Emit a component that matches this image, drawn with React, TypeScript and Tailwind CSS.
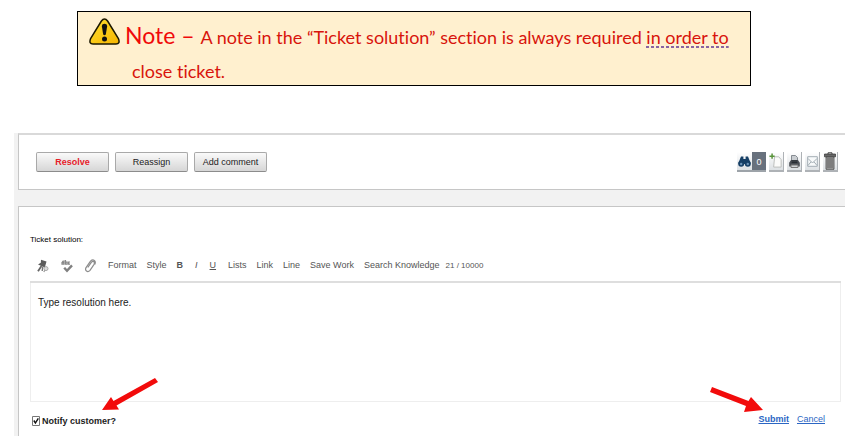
import { useState } from "react";

const tools = ["Lists", "Link", "Line", "Save Work", "Search Knowledge"];

const WarningIcon = () => (
  <svg width="32" height="28" viewBox="0 0 32 28" className="shrink-0" aria-hidden="true">
    <defs>
      <linearGradient id="warn" x1="0" y1="0" x2="1" y2="1">
        <stop offset="0" stopColor="#ffe030" />
        <stop offset="1" stopColor="#f5b400" />
      </linearGradient>
    </defs>
    <path d="M12.4 3Q15.5 -1.2 18.6 3L29.4 20.5Q31.5 26 27 26H4Q-0.5 26 1.6 20.5Z" fill="url(#warn)" stroke="#1c1800" strokeWidth="1.5" />
    <path d="M12.8 8Q13 5.8 15.5 5.8T18.2 8L16.8 16.5Q15.5 18 14.2 16.5Z" fill="#111" />
    <circle cx="15.5" cy="21" r="2.5" fill="#111" />
  </svg>
);

const BinocularsIcon = () => (
  <svg width="13" height="13" viewBox="0 0 13 13" aria-hidden="true">
    <path d="M3 1.5H5.4V4H7.6V1.5H10L12.4 7.5V9H.6V7.5Z" fill="#163f66" />
    <circle cx="3.2" cy="8.8" r="3" fill="#163f66" />
    <circle cx="9.8" cy="8.8" r="3" fill="#163f66" />
    <circle cx="3.2" cy="9" r="1.2" fill="#6b93b7" />
    <circle cx="9.8" cy="9" r="1.2" fill="#6b93b7" />
  </svg>
);

const NewPageIcon = () => (
  <svg width="15" height="18" viewBox="0 0 15 18" aria-hidden="true">
    <path d="M6 4.5H10.5L13 7.5V15.5H5Z" fill="#fbfbfa" stroke="#b9bbb9" />
    <path d="M3.3 1V6.6M.5 3.8H6.1" stroke="#58933a" strokeWidth="1.6" />
  </svg>
);

const PrinterIcon = () => (
  <svg width="11" height="15" viewBox="0 0 11 15" aria-hidden="true">
    <path d="M2.5 7V1.5H6.5L8.5 3.5V7Z" fill="#c9cdd1" stroke="#858b91" />
    <path d="M2 6H9L10.8 8.8V12.5H.2V8.8Z" fill="#4b4f55" />
    <path d="M2.6 7H8.4M2.6 8.6H8.4" stroke="#252a30" />
    <path d="M2 11H9V13.5H2Z" fill="#cfd2d5" stroke="#777" />
  </svg>
);

const MailIcon = () => (
  <svg width="11" height="11" viewBox="0 0 11 11" aria-hidden="true">
    <path d="M.7 .7H10.3V10.3H.7Z" fill="#f7f9fa" stroke="#a3adb4" />
    <path d="M1 2.5L5.5 7L10 2.5M1 9.5L4 5.8M10 9.5L7 5.8" fill="none" stroke="#a3adb4" />
  </svg>
);

const TrashIcon = () => (
  <svg width="12" height="18" viewBox="0 0 12 18" aria-hidden="true">
    <path d="M4 2V.8H8V2" fill="none" stroke="#444" />
    <path d="M.5 2H11.5V4.8H.5Z" fill="#686868" stroke="#333" strokeWidth=".7" />
    <path d="M2 5H10V17.3H2Z" fill="#a5a5a5" stroke="#444" strokeWidth=".8" />
    <path d="M4 6V16M6 6V16M8 6V16" stroke="#444" strokeWidth=".8" />
  </svg>
);

const PinIcon = () => (
  <svg width="12" height="14" viewBox="0 0 12 14" aria-hidden="true">
    <path d="M4 .8L9.5 2.6L8.8 5L7.8 8.4L5.6 7.6L1 5.4L3.8 3.8Z" fill="#5c5c5c" />
    <path d="M4.5 7L1 12.2" stroke="#666" strokeWidth="1.8" />
    <path d="M5.8 7.5L5.2 12" stroke="#777" strokeWidth="1.4" />
    <circle cx="9" cy="9.6" r="2" fill="#ddd" stroke="#aaa" />
    <path d="M7.8 11.2L6.8 13" stroke="#999" strokeWidth="1.2" />
  </svg>
);

const SpellIcon = () => (
  <svg width="12" height="14" viewBox="0 0 12 14" aria-hidden="true">
    <path d="M1 2.5L3 2V5.2H1V3.7H3M4.5 1V5.2H6.2V3.2H4.8M9 3H7.6V5.2H9" fill="none" stroke="#888" strokeWidth="1.2" />
    <path d="M3.2 8.8L6 11.8L11 6.4" fill="none" stroke="#808080" strokeWidth="2.4" />
  </svg>
);

const ClipIcon = () => (
  <svg width="11" height="14" viewBox="0 0 11 14" aria-hidden="true">
    <path d="M2.8 8.5L6.5 3.2Q7.8 1.8 8.9 2.8T8.9 5.6L5 11.3Q3.2 13.3 1.5 12T1.2 8.4L5.5 2.2Q7.5 .2 9.3 1.4T9.7 5.5" fill="none" stroke="#8c8c8c" strokeWidth="1.2" />
  </svg>
);

const iconButton = "flex h-5 w-[15px] items-center justify-center border-b-2 border-r border-[#aeb2b6] bg-gradient-to-b from-white to-[#dde1e4]";
const actionButton = "h-5 w-[73px] rounded-xs border border-[#a9a9a9] border-b-[#8c8c8c] bg-gradient-to-b from-[#fafafa] to-[#d6d6d6] text-[9px] leading-4 text-[#222]";

const App = () => {
  const [notify, setNotify] = useState(true);
  const [text, setText] = useState("Type resolution here.");

  return (
    <main className="bg-white pt-[11px] font-['Liberation_Sans',sans-serif]">
      <section className="mr-[101px] ml-[77px] flex h-[75px] items-start border border-black bg-[#fff0cf] pt-1.5 pl-[11px] font-['Lato',sans-serif] text-[#d8140c]">
        <WarningIcon />
        <p className="pl-1 text-lg leading-[34px] whitespace-nowrap [font-variant-ligatures:none]">
          <span className="text-[23px] leading-[34px] text-[#f00a0a]">Note – </span>
          A note in the “Ticket solution” section is always required{" "}
          <span className="bg-[repeating-linear-gradient(90deg,#8864a2_0_3px,transparent_3px_5px)] bg-[length:100%_2px] bg-bottom bg-no-repeat">in order to</span>
          <br />
          <span className="pl-[7px]">close ticket.</span>
        </p>
      </section>

      <div className="mt-[47px] mr-[7px] ml-[14px] bg-[#f2f2f2] pl-1">
        <header className="flex h-[57px] items-center justify-between border-t-2 border-b border-l border-[#c6c6c6] border-t-[#d9d9d9] bg-white pr-[7px] pl-[17px]">
          <div className="flex gap-1.5">
            <button className={`${actionButton} border-[#777b84] font-bold text-[#e62129]`}>Resolve</button>
            <button className={actionButton}>Reassign</button>
            <button className={actionButton}>Add comment</button>
          </div>
          <div className="flex gap-[3px]">
            <button aria-label="Find" className="flex h-5 w-[29px] border-b-2 border-[#9da3a9]">
              <span className="flex h-full w-[15px] items-center justify-center bg-gradient-to-b from-white to-[#dde1e4]"><BinocularsIcon /></span>
              <span className="h-full flex-1 bg-[#68717d] text-[9px] leading-5 text-white">0</span>
            </button>
            <button aria-label="New" className={iconButton}><NewPageIcon /></button>
            <button aria-label="Print" className={iconButton}><PrinterIcon /></button>
            <button aria-label="Email" className={iconButton}><MailIcon /></button>
            <button aria-label="Delete" className={iconButton}><TrashIcon /></button>
          </div>
        </header>

        <section className="relative mt-4 border-t border-l border-[#c6c6c6] bg-white pt-[27px] pr-1 pb-2 pl-[11px]">
          <label htmlFor="solution" className="block text-[8px] leading-3 text-black">Ticket solution:</label>
          <div className="flex h-[37px] items-center gap-2.5 border-b-2 border-[#dedede] pt-1 pl-[7px] text-[9px] whitespace-nowrap text-[#555]">
            <div className="mr-0.5 flex gap-3">
              <button aria-label="Pin"><PinIcon /></button>
              <button aria-label="Spelling"><SpellIcon /></button>
              <button aria-label="Attach"><ClipIcon /></button>
            </div>
            <button>Format</button>
            <button>Style</button>
            <div className="mr-0.5 flex gap-3">
              <button className="font-bold">B</button>
              <button className="italic">I</button>
              <button className="underline">U</button>
            </div>
            {tools.map((tool) => (
              <button key={tool}>{tool}</button>
            ))}
            <span className="-ml-1 text-[8px]">{text.length} / 10000</span>
          </div>
          <textarea
            id="solution"
            value={text}
            onChange={(e) => setText(e.target.value)}
            className="block h-[119px] w-full resize-none border border-t-0 border-[#eeeeee] px-[7px] pt-3 text-[10px] leading-4 text-[#222] outline-none"
          />
          <div className="flex h-[26px] items-end justify-between pr-4 pl-0.5 text-[9px]">
            <label className="flex items-center gap-0.5 font-bold text-[#222]">
              <input
                type="checkbox"
                checked={notify}
                onChange={(e) => setNotify(e.target.checked)}
                className="peer sr-only"
              />
              <svg width="8" height="10" viewBox="0 0 8 10" className="peer-[:not(:checked)]:[&_.tick]:hidden" aria-hidden="true">
                <path d="M.5 .5H7.5V9.5H.5Z" fill="#fff" stroke="#777" />
                <path className="tick" d="M1.8 4.5L3.4 7L6.3 2.3" fill="none" stroke="#111" strokeWidth="1.4" />
              </svg>
              Notify customer?
            </label>
            <div className="flex gap-2 pb-0.5 text-[#2b66c4]">
              <a href="#submit" className="font-bold underline">Submit</a>
              <a href="#cancel" className="underline">Cancel</a>
            </div>
          </div>
          <svg width="56" height="34" viewBox="0 0 56 34" className="absolute bottom-6 left-[83px]" aria-hidden="true">
            <path d="M0 32L9 19L11.5 23L53 0L56 4L14.5 27.5L17 31.5Z" fill="#f20b0b" />
          </svg>
          <svg width="53" height="25" viewBox="0 0 53 25" className="absolute right-[82px] bottom-6" aria-hidden="true">
            <path d="M2 0L38.5 14L41 10L53 23L34 25L36 19L0 5Z" fill="#f20b0b" />
          </svg>
        </section>
      </div>
    </main>
  );
};

export default App;
